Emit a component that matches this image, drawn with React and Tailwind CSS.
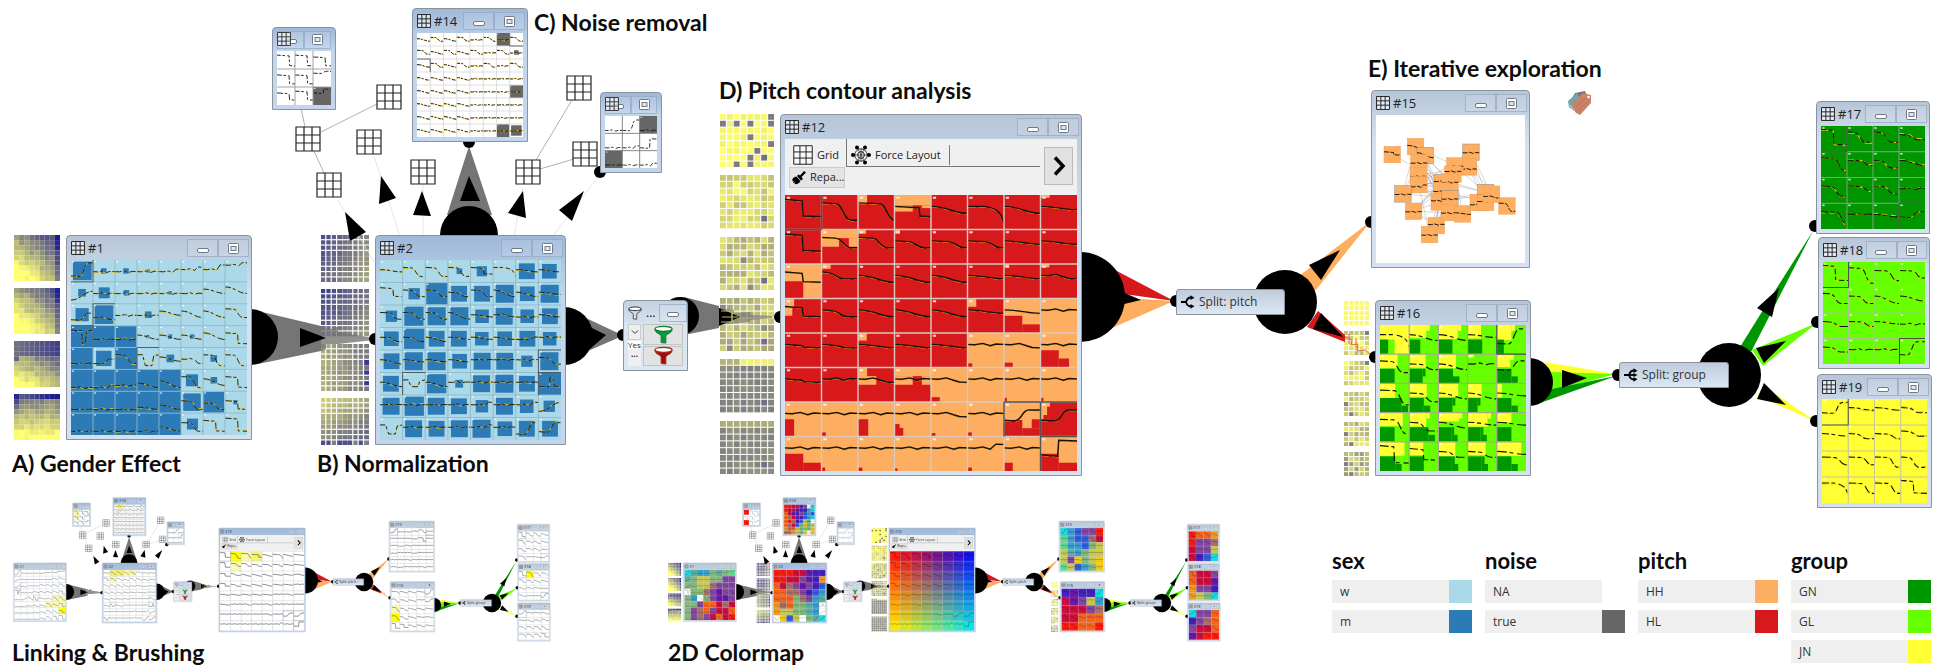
import React from "react";

/* ---------- helpers ---------- */

const rnd = (a, b, s) => {
  const v = Math.sin(a * 127.1 + b * 311.7 + s * 74.7) * 43758.5453;
  return v - Math.floor(v);
};

const mix = (p, q, t) => p.map((v, i) => Math.round(v + (q[i] - v) * t));
const rgb = (c) => `rgb(${c[0]},${c[1]},${c[2]})`;
const YEL = [255, 255, 112];
const GRY = [128, 128, 128];
const NAV = [28, 28, 144];
const quality = (t) => {
  const k = Math.max(-1, Math.min(1, t));
  return rgb(k >= 0 ? mix(GRY, YEL, k) : mix(GRY, NAV, -k));
};

const rainbow = (u, v) =>
  rgb(mix(mix([255, 30, 14], [22, 20, 240], u), mix([255, 228, 0], [16, 228, 228], u), v));

const PALETTE = {
  r: "#fb1d10", m: "#cc1040", o: "#f4641c", a: "#f09a1e", y: "#f6c90e", k: "#c8c850",
  g: "#84b878", l: "#60d890", t: "#58b0a0", c: "#18dce0", s: "#3a9fce", b: "#3460dc",
  i: "#4820c0", p: "#6c18a8", v: "#8448a0", u: "#a87068", w: "#ffffff",
};

const GREEN = "#009600";
const LIME = "#66ff00";
const YELLOW = "#ffff33";
const RED = "#d7191c";
const ORANGE = "#fdae61";
const SKY = "#abd9e9";
const BLUE = "#2c7bb6";
const DARK = "#666666";

/* Contour codes: start tenth, end tenth, shape, optional position tenth. */
const contour = (code) => {
  const a = +code[0] * 10 + 3;
  const b = +code[1] * 10 + 3;
  const k = code[2] || "l";
  const p = (+code[3] || 6) * 10;
  if (k === "s") return `M0 ${a}L${p - 22} ${a + 2}C${p} ${a + 3} ${p - 2} ${b - 2} ${p + 20} ${b}L100 ${b}`;
  if (k === "d") return `M0 ${a}L${p - 3} ${a + 4}L${p} ${b - 2}L100 ${b}`;
  if (k === "e") return `M0 ${a}L45 ${a}C75 ${a + 4} 92 ${a + 12} 100 ${b}`;
  if (k === "f") return `M0 ${a}L20 ${a + 1}L42 ${a - 3}L62 ${a + 4}L78 ${b - 1}L100 ${b}`;
  if (k === "n") return `M0 ${b}L48 ${b}L52 ${a}L64 ${a}L72 ${b}L100 ${b}`;
  if (k === "q") return `M0 ${a}L25 ${a}L38 ${b}L68 ${b}L76 ${a + 5}L100 ${a}`;
  return `M0 ${a}C45 ${a} 60 ${b} 100 ${b}`;
};

const rows = (s) => s.trim().split("\n").map((r) => r.trim().split(/\s+/));

/* ---------- data ---------- */

const C1 = rows(`
  71s 55f 55f 55f 54f 43f 42f 21f
  84l 55f 55f 55f 55f 55f 35l 25l
  74s 67f 55f 55f 35l 36l 36l 26s
  82n 66f 66f 46l 46l 46l 36l 38d
  77f 75s 37s 38q 46l 57f 38s 38s
  88f 87f 77f 68l 58l 38s 47l 38d
  88f 88f 88f 78l 68l 48s 58s 48d
  88f 88f 88f 88f 68l 48s 38d 28d`);
const F1 = rows(`
  .85 .25 .25 .15 0 0 0 0
  .35 .5 .25 .08 .15 0 0 0
  .6 .85 .08 .3 0 0 0 0
  1 1 .95 .15 .2 .2 0 0
  1 .7 1 0 .35 0 .3 0
  1 1 1 1 1 .55 .3 0
  1 1 1 1 1 .8 .95 .2
  1 1 1 1 1 .5 0 0`);
const C2 = rows(`
  45l 37s 37s 37s 36d 37e 45l 45l
  26d 36s 36s 46s 36s 36l 46l 45l
  36s 36s 36s 36l 45l 45f 55f 45l
  46s 46s 46l 45l 45l 45l 54f 44f
  46l 45l 45l 45l 44f 44f 44f 36s
  46l 36q 46l 44f 44f 44f 44f 26n
  44f 44f 44f 44f 43f 44f 43f 73l
  37q 44f 44f 44f 43f 44f 72s 62s`);
const F2 = rows(`
  0 0 0 .25 .45 0 .7 .65
  0 .5 .95 .7 .7 .8 .65 .8
  .5 .85 .8 .8 .6 .75 .6 .7
  .65 .9 .7 .7 .6 .65 .7 .6
  .7 .8 .8 .65 .75 .75 .5 .8
  .7 0 .85 .35 .75 .8 .7 1
  .75 .85 .75 .7 .55 .75 .6 .5
  0 .75 .7 .75 .8 .65 .7 .7`);
const C12 = rows(`
  16d5 27s6 27s8 36d7 35l 38e 35l 34l
  16d5 25s6 25s6 35s6 35s7 35s7 34l 34l
  25d5 24s4 35l 35l 35l 34l 34l 34f
  25d5 35s5 35l 35l 35l 34l 34l 33f
  34d5 34s5 34l 34l 34l 33f 34f 33f
  34d5 33f 34f 33f 34f 33f 33f 33f
  33f 33f 33f 33f 34f 33f 52s5 52s6
  33f 33f 33f 33f 33f 32f 33f 51d5`);
const R = RED;
const O = ORANGE;
const P12 = {
  "0,2": [R, [0, 0, 25, 25]], "0,3": [R, [0, 0, 100, 30], [0, 30, 50, 18], [75, 30, 25, 8]],
  "0,7": [R, [0, 0, 25, 8]], "1,1": [R, [0, 0, 100, 25], [0, 25, 48, 25], [75, 25, 25, 25]],
  "1,2": [R, [0, 0, 22, 12]], "1,3": [R, [0, 0, 15, 12]],
  "2,0": [O, [0, 50, 50, 50]], "2,1": [R, [0, 0, 25, 14]], "2,6": [R, [0, 0, 14, 10]], "2,7": [R, [0, 0, 24, 10]],
  "3,0": [R, [0, 0, 25, 25], [0, 25, 20, 25]], "3,5": [R, [0, 0, 24, 24]],
  "3,6": [O, [0, 50, 50, 50], [50, 75, 50, 25]], "3,7": [O], "4,2": [R, [0, 0, 24, 22]],
  "4,5": [O, [0, 88, 13, 12]], "4,6": [O, [0, 86, 24, 14]], "4,7": [O, [0, 50, 50, 50], [50, 74, 28, 26]],
  "5,2": [R, [0, 0, 25, 50], [25, 25, 25, 25]], "5,3": [R, [0, 0, 100, 25], [0, 25, 50, 25], [75, 25, 25, 25]],
  "5,4": [O, [0, 86, 24, 14]], "5,5": [O], "5,6": [O, [0, 88, 8, 12]], "5,7": [O, [0, 88, 8, 12]],
  "6,0": [O, [0, 50, 25, 50]], "6,1": [O, [0, 88, 12, 12]], "6,2": [O, [0, 50, 28, 50]], "6,3": [O, [0, 64, 14, 36], [0, 75, 24, 25]],
  "6,4": [O, [0, 90, 12, 10]], "6,5": [O, [0, 88, 12, 12]], "6,6": [O, [0, 52, 50, 48], [50, 76, 50, 24], [76, 50, 24, 26]],
  "6,7": [R],
  "7,0": [O, [0, 50, 50, 50], [50, 76, 50, 24]], "7,1": [O, [0, 90, 10, 10]], "7,2": [O, [0, 90, 12, 10]], "7,3": [O, [0, 92, 8, 8]],
  "7,4": [O], "7,5": [O, [0, 90, 12, 10]], "7,6": [O, [0, 76, 24, 24]], "7,7": [O, [0, 50, 50, 50], [50, 76, 50, 24]],
};
const C16 = rows(`
  37e 35l 35l 34l 61s6
  26s6 35s6 35l 33f 52s6
  27s7 36s6 35l 35l 34l
  27s7 36s5 35l 34l 34l
  17d5 26d5 35s5 35s6 34l`);
const P16 = [
  [[100, 50, 28], [58, 44, 38], [66, 48, 48], [46, 46, 50], [50, 52, 24]],
  [[60, 48, 50], [56, 46, 46], [60, 48, 50], [22, 12, 0], [46, 44, 50]],
  [[52, 50, 74], [60, 46, 50], [68, 46, 48], [48, 48, 34], [18, 48, 50]],
  [[78, 46, 50], [58, 48, 66], [70, 30, 44], [68, 48, 44], [50, 34, 50]],
  [[84, 48, 52], [48, 46, 50], [58, 50, 46], [62, 46, 48], [84, 48, 50]],
];
const C17 = rows(`
  17d5 26s5 26s5 35s5
  27s7 35s7 36s5 35l
  37s6 35s7 36s6 44f
  38s8 44f 45l 53s6`);
const C18 = rows(`
  17d5 28s7 37s7 36s7
  26s5 36s6 36l 35l
  35s5 35s7 34l 44f
  35s5 44f 44f 61s5`);
const C19 = rows(`
  51s6 34l 34l 35s5
  34l 35s5 35s7 24s5
  25s7 25s7 26s7 26s5
  27e 26s7 26s7 16d5`);
const C14 = Array.from({ length: 8 }, (_, r) =>
  Array.from({ length: 8 }, (_, c) => (r < 3 && (c + r) % 2 ? "36s" : c < 4 ? "46l" : "55f")));
const CL = rows(`
  28d7 28d7 38d7
  38d7 38d7 21s
  37d7 27d7 31d`);
const CR = rows(`
  88f 82s 88f
  88f 87f 83d
  88f 88f 87f`);
const C15 = rows(`
  61s 55f 55f 44f 26s
  44f 44f 44f 54f 38d
  44f 55f 45f 44f 44f
  55f 44f 44f 54f 44f
  44f 44f 45f 44f 44f
  44f 54f 44f 44f 45f`);

const map = (s) => rows(s.replace(/(\S)/g, "$1 "));
const M1 = map(`ctssgtgl
tgkkggvv
ggkkuvvv
wgguvpvv
gswgvppv
ggvoomum
gvuovmmo
gvuvmomr`);
const M2 = map(`rrrmmpii
rrmmvpia
omuvpvib
oouuvibs
oooguvst
auoggtsw
akkggtsw
wybkwgtc`);
const M14 = map(`rrmmpvwc
rmmpiisc
ompivbsb
oumpibsc
oruibktw
oumbgkgk
auokglgy
uoakgywy`);
const M15 = map(`csbvvr
lsbbum
lssbgk
ktsgkk
kvygky
lkbsgy
`);
const M16 = map(`ipiic
mpvks
mmmvu
mmooo
rroor`);
const M17 = map(`rooa
rvvu
mvvk
mibc`);
const M18 = map(`ommv
ommp
avvi
akgc`);
const M19 = map(`cvvo
ivuo
vmmo
pmrr`);

/* ---------- cell grids ---------- */

function CellGrid({ id, codes, mode, base, map: colours, bright = {}, lines = "#ffffff", sw = 4, marks = [], yellow = true }) {
  const n = codes.length;
  const m = codes[0].length;
  const thumb = mode !== "full";
  const solid = id === 12;
  const cells = [];
  for (let r = 0; r < n; r++) {
    for (let c = 0; c < m; c++) {
      let fill = "#ffffff";
      if (mode === "map") {
        fill = colours ? PALETTE[(colours[r] || [])[c]] || "#ffffff" : rainbow(c / (m - 1), r / (n - 1));
      }
      const d = contour(codes[r][c]);
      cells.push(
        <g key={r + "-" + c} transform={`translate(${c * 100} ${r * 100})`}>
          {mode === "full" ? base(r, c) : <rect width="100" height="100" fill={fill} />}
          {mode === "brush" && bright[r + "," + c] && <rect width="100" height="100" fill={bright[r + "," + c]} />}
          {!thumb && yellow && !solid && (
            <path d={d} transform={`translate(0 ${Math.round(rnd(r, c, 9) * 8) - 4})`} fill="none" stroke="#f5c211" strokeWidth={sw} strokeDasharray={`${16 + Math.round(rnd(r, c, 2) * 14)} 16`} />
          )}
          {!thumb && solid && (
            <path d={d} transform="translate(0 2)" fill="none" stroke="#e89a10" strokeWidth={sw - 1} strokeDasharray="22 9" />
          )}
          <path
            d={d}
            fill="none"
            stroke={mode === "map" ? "#00000066" : mode === "brush" ? "#555" : "#151208"}
            strokeWidth={thumb ? sw * 1.6 : sw}
            strokeDasharray={solid || thumb ? undefined : `${20 + Math.round(rnd(r, c, 6) * 16)} 9 14 13`}
          />
          {!thumb && <rect x="5" y="5" width="9" height="6" fill="#ffffff" opacity="0.8" />}
        </g>
      );
    }
  }
  const grid = [];
  for (let c = 1; c < m; c++) grid.push(<path key={"v" + c} d={`M${c * 100} 0V${n * 100}`} />);
  for (let r = 1; r < n; r++) grid.push(<path key={"h" + r} d={`M0 ${r * 100}H${m * 100}`} />);
  return (
    <svg className="block h-full w-full" viewBox={`0 0 ${m * 100} ${n * 100}`} preserveAspectRatio="none" aria-hidden="true">
      {cells}
      <g stroke={thumb ? "#c8ccd0" : lines} strokeWidth={sw} fill="none" opacity={mode === "map" ? 0.4 : 1}>{grid}</g>
      <g stroke="#33383c" strokeWidth={sw} fill="none" opacity={thumb ? 0.45 : 0.8}>
        {marks.map(([r, c], i) => (
          <path key={i} d={`M${c * 100 + (c ? 0 : 100)} ${r * 100}v100M${c * 100} ${r * 100 + (r ? 0 : 100)}h100`} />
        ))}
      </g>
    </svg>
  );
}

const sized = (F) => (r, c) => {
  const f = +F[r][c] * 100;
  const j = f > 98 ? 0 : Math.round((rnd(r, c, 7) - 0.5) * 8);
  return (
    <>
      <rect width="100" height="100" fill={SKY} />
      {f > 0 && <rect x={50 - f / 2 + j / 2} y={50 - f / 2} width={f} height={f} fill={BLUE} />}
    </>
  );
};
const plain = (fill) => () => <rect width="100" height="100" fill={fill} />;
const patched = (r, c) => {
  const p = P12[r + "," + c] || [R];
  const other = p[0] === R ? O : R;
  return (
    <>
      <rect width="100" height="100" fill={p[0]} />
      {p.slice(1).map(([x, y, w, h], i) => (
        <rect key={i} x={x} y={y} width={w} height={h} fill={other} />
      ))}
      {r === 6 && c === 7 && <path d="M0 0H26V14H18V38H8V50H0Z" fill={O} />}
    </>
  );
};
const grouped = (r, c) => {
  const [y, h, g] = P16[r][c];
  return (
    <>
      <rect width="100" height="100" fill={LIME} />
      <rect width={y} height={h} fill={YELLOW} />
      {r === 0 && c === 0 && <rect x="50" y="45" width="50" height="55" fill={YELLOW} />}
      <rect y="50" width={g} height="50" fill={GREEN} />
      {g > 40 && rnd(r, c, 3) > 0.45 && <rect x={g} y="76" width="22" height="24" fill={GREEN} />}
      {g > 0 && g < 50 && r > 0 && <rect x={g} y="50" width="10" height="26" fill={GREEN} />}
      {y < 80 && y > 30 && rnd(r, c, 5) > 0.4 && <rect x={y} y="0" width="12" height="20" fill={YELLOW} />}
    </>
  );
};
const noisy = (r, c) => {
  const dark = { "0,6": 100, "4,7": 100, "7,6": 100, "7,7": 80, "1,7": 35 }[r + "," + c] || 0;
  return (
    <>
      <rect width="100" height="100" fill="#fff" />
      <rect x={50 - dark / 2} y={50 - dark / 2} width={dark} height={dark} fill={DARK} />
    </>
  );
};
const single = (keys) => (r, c) => <rect width="100" height="100" fill={keys.includes(r + "," + c) ? DARK : "#fff"} />;

/* ---------- quality strips ---------- */

const WEAVE_X = [2.2, 2.2, 2.2, 0.5, 0.4, 2.2, 2.2, 2.4, 1];
const WEAVE_Y = [2.2, 2.2, 2.2, 0.5, 0.5, 2.2, 2.2, 2.2, 1];

function Strip({ kind, index, n, gap }) {
  const out = [];
  for (let r = 0; r < n; r++) {
    for (let c = 0; c < n; c++) {
      const k = rnd(r, c, index + 11);
      let t = 0;
      if (kind === "a") {
        const slope = [0.1, 0.12, 0.25, 0.4][index];
        t = (r / (n - 1)) * (0.9 + slope) - (c / (n - 1)) * (0.95 - slope) + (index === 1 ? 0.08 : 0) + (k - 0.5) * 0.25;
        if (index < 2) t += 0.25 - (c === n - 1 ? 0.4 : 0);
        if (index === 3) t = r === 0 ? -0.3 - (c / n) * 0.9 : (r / (n - 1)) * 1.15 - 0.1 + (k - 0.5) * 0.25;
        if (index > 1 && c === 0 && r < 4) t = index === 2 ? -0.7 + r * 0.15 : -0.9 + r * 0.35;
        if (index === 2 && r < 3) t = -0.15 - c * 0.06;
      } else if (kind === "b") {
        t = [-0.5 + c * 0.07 + r * 0.03, -0.6 + c * 0.06 + r * 0.04, 0.35 - c * 0.05, 0.65 - r * 0.08 - c * 0.04][index] + (k - 0.5) * 0.12;
        if (index === 2 && c === n - 1 && k > 0.5) t = -0.7;
        if (index === 3 && r === n - 1) t = k > 0.5 ? -0.5 : 0;
      } else if (kind === "d") {
        t = [0.95, 0.72, 0.6, 0.5, 0.05, 0.08][index] + (k - 0.5) * [0.15, 0.45, 0.5, 0.5, 0.12, 0.16][index];
        if (index === 0 && k > 0.87) t = -0.05;
        if ((index === 2 || index === 3) && k > 0.9) t = 0.1;
        if (index === 4 && r === 0) t = k > 0.4 ? 0.9 : 0.4;
        if (index === 5 && r === 0) t = 0.35;
        if (r === 6 && c === 6) t = -0.15;
      } else {
        t = [0.95, 0.7, 0.75, 0.65, 0.6, 0.45][index] + (k - 0.5) * (index ? 0.5 : 0);
        if (index > 0 && index < 3 && r === 0 && c === n - 1) t = 0;
        if (index > 2 && ((r === 2 && c === 0) || (r === n - 1 && c === 1))) t = 0;
      }
      const gx = kind === "b" ? WEAVE_X[c] : gap;
      const gy = kind === "b" ? WEAVE_Y[r] : gap;
      out.push(<rect key={r + "-" + c} x={c * 10} y={r * 10} width={10 - gx} height={10 - gy} fill={quality(t)} />);
    }
  }
  return (
    <svg className="block w-full min-h-0 flex-1" viewBox={`0 0 ${n * 10 - gap} ${n * 10 - gap}`} preserveAspectRatio="none" aria-hidden="true">
      {out}
    </svg>
  );
}

function Strips({ kind, count, n, gap, className }) {
  return (
    <div className={"absolute flex flex-col " + className}>
      {Array.from({ length: count }, (_, i) => (
        <Strip key={i} kind={kind} index={i} n={n} gap={gap} />
      ))}
    </div>
  );
}

/* ---------- icons ---------- */

function GridIcon({ className = "size-3.5", w = 1 }) {
  return (
    <svg className={"shrink-0 " + className} viewBox="0 0 26 26" fill="#fff" fillOpacity="0.6" stroke="#222" strokeWidth={w} aria-hidden="true">
      <path d="M1 1H25V25H1ZM9 1V25M17 1V25M1 9H25M1 17H25" />
    </svg>
  );
}

function ForceIcon() {
  const dots = [[2, 10], [18, 10], [6, 2.4], [14, 2.4], [6, 17.6], [14, 17.6]];
  return (
    <svg className="size-5 shrink-0" viewBox="0 0 20 20" aria-hidden="true">
      <path d="M6 2.400L14 17.600M14 2.400L6 17.600M2 10H18M10 4V16" stroke="#333" strokeWidth="0.700" />
      <circle cx="10" cy="10" r="6.200" fill="none" stroke="#222" strokeWidth="0.900" />
      <circle cx="10" cy="10" r="3.400" fill="none" stroke="#222" strokeWidth="1" />
      {dots.map(([x, y]) => (
        <circle key={x + "-" + y} cx={x} cy={y} r="2" fill="#000" />
      ))}
    </svg>
  );
}

function BrushIcon() {
  return (
    <svg className="size-3.5 shrink-0" viewBox="0 0 14 14" aria-hidden="true">
      <path d="M12 0L14 1.5L9.5 6L11 8L9 9.5L5 5L6.5 3.5L8 4.5Z" />
      <path d="M4.5 5.5L8.5 10C7 13 4 13.5 2.5 13L3 11.5L1.2 12L1.5 10L0 9.5C0.5 7 2 6 4.5 5.5Z" />
    </svg>
  );
}

function Funnel({ fill, stroke, className }) {
  return (
    <svg className={"shrink-0 " + className} viewBox="0 0 20 20" aria-hidden="true">
      <path d="M1 4.5C1 9 7.500 9 7.500 12V18.500L12.500 19V12C12.500 9 19 9 19 4.500Z" fill={fill} stroke={stroke} strokeWidth="1" />
      <ellipse cx="10" cy="4" rx="9" ry="2.600" fill="#fff" stroke={stroke} strokeWidth="1.300" />
    </svg>
  );
}

function SplitIcon({ three }) {
  return (
    <svg className="size-3.5 shrink-0" viewBox="0 0 14 14" fill="none" stroke="#000" strokeWidth="1.800" aria-hidden="true">
      <path d="M0 7H5C6 3.500 8 2.500 10 2.500M5 7C6 10.500 8 11.500 10 11.500" />
      {three && <path d="M5 7H11" />}
      <path d="M9.500 0.300L13.500 2.700L9.500 5ZM9.500 9L13.500 11.300L9.500 13.700Z" fill="#000" stroke="none" />
      {three && <path d="M9.500 5L13.500 7L9.500 9Z" fill="#000" stroke="none" />}
    </svg>
  );
}

function MinButton() {
  return (
    <button type="button" aria-label="Minimize" className="flex h-[18px] min-w-0 flex-1 items-center justify-center border border-[#93a5bb]/70 bg-white/10">
      <span className="mt-1 h-[5px] w-3 rounded-xs border border-[#6f7884] bg-white" />
    </button>
  );
}

function MaxButton() {
  return (
    <button type="button" aria-label="Maximize" className="flex h-[18px] min-w-0 flex-1 items-center justify-center border border-[#93a5bb]/70 bg-white/10">
      <svg className="size-[11px]" viewBox="0 0 11 11" aria-hidden="true">
        <rect x="0.500" y="0.500" width="10" height="10" rx="1" fill="#fff" stroke="#6f7884" />
        <rect x="3" y="3.500" width="5" height="4" fill="#dce6f2" stroke="#6f7884" />
      </svg>
    </button>
  );
}

/* ---------- windows ---------- */

function Win({ title, active, compact, className, children }) {
  return (
    <section
      className={
        "absolute flex flex-col rounded-t-[4px] border border-[#8b949e] px-1 pb-1 " +
        (active ? "bg-linear-to-b from-[#9fb9d9] to-[#c3d6ee] to-30% " : "bg-linear-to-b from-[#b6c6d8] to-[#d5e1f0] to-30% ") +
        className
      }
    >
      {compact ? (
        <header className="relative flex h-[23px] shrink-0 items-center">
          <GridIcon className="absolute left-0 top-1 size-3.5" w={1.6} />
          <MinButton />
          <MaxButton />
        </header>
      ) : (
        <header className="flex h-6 shrink-0 items-center gap-[3px]">
          <GridIcon w={1.8} />
          <h3 className="flex-1 text-[13px] leading-5 text-[#222]">{title}</h3>
          <div className="-mr-0.5 flex w-[62px]">
            <MinButton />
            <MaxButton />
          </div>
        </header>
      )}
      <div className="flex min-h-0 flex-1 flex-col">{children}</div>
    </section>
  );
}

function SplitNode({ label, three, className }) {
  return (
    <div className={"absolute flex items-center gap-1 rounded-t-[3px] border border-[#8b949e] bg-linear-to-b from-[#bfccdb] to-[#dce7f4] px-1 text-[12px] text-[#333] " + className}>
      <SplitIcon three={three} />
      <span className="whitespace-nowrap">{label}</span>
    </div>
  );
}

function FilterNode() {
  return (
    <section className="absolute left-[623px] top-[300px] flex h-[71px] w-[65px] flex-col rounded-t-[4px] border border-[#8b949e] bg-linear-to-b from-[#c3d1e2] to-[#dbe6f3] to-40% px-1">
      <header className="flex h-[23px] shrink-0 items-center gap-1 text-[12px]">
        <Funnel fill="none" stroke="#222" className="size-3.5" />
        <span className="flex-1">...</span>
        <div className="-mr-1 flex w-[30px]">
          <MinButton />
        </div>
      </header>
      <div className="flex min-h-0 flex-1 gap-0.5 pb-1">
        <div className="flex w-[13px] flex-col items-center justify-between bg-[#efefef] text-[8px] leading-2 text-[#222]">
          <button type="button" aria-label="Show list" className="flex h-4 w-full items-center justify-center border border-[#ccc]">
            <svg className="size-2" viewBox="0 0 8 8" fill="none" stroke="#333" aria-hidden="true"><path d="M1 2.500L4 5.500L7 2.500" /></svg>
          </button>
          <span className="w-full bg-white">Yes</span>
          <span className="pb-2 font-bold">...</span>
        </div>
        <div className="flex flex-1 flex-col gap-px">
          <button type="button" aria-label="Keep" className="flex min-h-0 flex-1 items-center justify-center border border-[#c4c4c4] bg-[#e2e2e2]">
            <Funnel fill="#0c9a3c" stroke="#0c7c30" className="size-[19px]" />
          </button>
          <button type="button" aria-label="Remove" className="flex min-h-0 flex-1 items-center justify-center border border-[#c4c4c4] bg-[#e2e2e2]">
            <Funnel fill="#a00c0c" stroke="#a03020" className="size-[19px]" />
          </button>
        </div>
      </div>
    </section>
  );
}

const FORCE = [
  [162, 286, "35d"], [232, 262, "46l"], [261, 289, "36l"], [242, 310, "55f"], [240, 350, "55f"], [242, 376, "65f"],
  [194, 404, "55f"], [226, 456, "55f"], [294, 499, "44f"], [274, 526, "55f"], [398, 279, "55f"], [391, 323, "66f"],
  [350, 320, "55f"], [344, 345, "33f"], [312, 370, "44f"], [335, 368, "55f"], [310, 395, "55f"], [303, 428, "44f"],
  [335, 418, "55f"], [333, 460, "55f"], [373, 464, "45l"], [420, 430, "66f"], [442, 400, "66f"], [442, 430, "44f"],
  [460, 405, "67f"], [506, 440, "38s"],
];

function ForceChart() {
  const at = (i) => [(FORCE[i][0] - 138) / 3 + 8, (FORCE[i][1] - 192) / 3 + 8];
  const links = [];
  for (let i = 0; i < FORCE.length; i++)
    for (let j = i + 1; j < FORCE.length; j++)
      if (rnd(i, j, 4) > 0.62) {
        const [x1, y1] = at(i);
        const [x2, y2] = at(j);
        if (Math.hypot(x1 - x2, y1 - y2) < 62) links.push([x1, y1, x2, y2]);
      }
  return (
    <svg className="block h-full w-full bg-white" viewBox="0 0 149 148" preserveAspectRatio="none" aria-hidden="true">
      <g stroke="#999" strokeWidth="0.400">
        {links.map((l, i) => (
          <line key={i} x1={l[0]} y1={l[1]} x2={l[2]} y2={l[3]} />
        ))}
      </g>
      {FORCE.map(([x, y, code], i) => (
        <g key={i} transform={`translate(${(x - 138) / 3} ${(y - 192) / 3}) scale(0.165)`}>
          <rect width="100" height="100" fill={ORANGE} stroke={i % 4 === 2 ? "#888" : "#f0a050"} strokeWidth="3" />
          <path d={contour(code)} fill="none" stroke="#1c1508" strokeWidth="6" strokeDasharray="30 8" />
        </g>
      ))}
    </svg>
  );
}

function Toolbar() {
  return (
    <div className="flex h-14 shrink-0 items-start bg-[#f0f0f0] pl-1 pr-1 text-[11px] text-[#222]">
      <div className="flex flex-1 flex-col">
        <div className="flex h-7">
          <button type="button" className="flex w-[58px] items-center gap-1 border-r border-[#777] pl-1 pt-1">
            <GridIcon className="size-5" w={1.3} />
            Grid
          </button>
          <button type="button" className="mr-1 flex flex-1 items-center gap-1 border-b border-[#777] pl-1 pt-1">
            <ForceIcon />
            <span className="whitespace-nowrap border-r border-[#777] pr-2 leading-5">Force Layout</span>
          </button>
        </div>
        <button type="button" className="flex h-[21px] w-14 items-center gap-1 border border-[#ccc] bg-[#e4e4e4] pl-0.5">
          <BrushIcon />
          Repa...
        </button>
      </div>
      <button type="button" aria-label="Next" className="mt-2 flex h-[38px] w-[29px] items-center justify-center border border-[#bbb] bg-[#e1e1e1]">
        <svg className="size-5" viewBox="0 0 20 20" fill="none" stroke="#000" strokeWidth="3.500" aria-hidden="true">
          <path d="M6 1.500L14 10L6 18.500" />
        </svg>
      </button>
    </div>
  );
}

/* ---------- connectors ---------- */

function Ports() {
  const ports = [
    [375, 339], [469, 142], [623, 335], [780, 317], [1176, 301], [1371, 222], [1375, 357], [1618, 375], [1815, 226], [1817, 322], [1816, 421], [600, 172],
  ];
  const hubs = [[250, 337, 28], [469, 235, 29], [564, 336, 29], [680, 316, 19], [1080, 297, 45], [1285, 302, 32], [1529, 382, 24], [1729, 375, 32]];
  return (
    <svg className="absolute left-0 top-0 h-[520px] w-[1949px]" viewBox="0 0 1949 520" aria-hidden="true">
      <g fill="#757575">
        <path d="M258 311L321 326V351L258 364Z" />
        <path d="M321 326H326V329H332V327H338V332L374 338V340L338 344H326V349L321 351Z" opacity="0.8" />
        <path d="M447 215L469 146L492 215Z" />
        <path d="M588 319L620 334V337L588 351Z" />
        <path d="M684 297L719 306V328L684 335Z" />
        <path d="M719 308L734 310V313L750 312V315L772 316V318L750 320V322L719 325Z" opacity="0.65" />
      </g>
      <path d="M1115 270L1174 301L1124 294Z" fill={RED} />
      <path d="M1112 328L1174 301L1124 298Z" fill={ORANGE} />
      <path d="M1299 276L1316 290L1371 221Z" fill={ORANGE} />
      <path d="M1318 311L1307 327L1345 342V335Z" fill={RED} />
      <path d="M1345 337L1352 340L1351 345L1358 344L1357 351L1365 350L1374 357M1349 334V344M1356 338V347" fill="none" stroke="#e06a3a" strokeWidth="1" />
      <path d="M1545 362L1616 374L1550 374Z" fill={YELLOW} />
      <path d="M1552 372L1616 374L1548 392Z" fill={LIME} />
      <path d="M1552 389L1616 376L1540 403Z" fill={GREEN} />
      <path d="M1740 347L1751 352L1813 231L1778 286Z" fill={GREEN} />
      <path d="M1752 350L1763 366L1817 323Z" fill={LIME} />
      <path d="M1757 396L1764 386L1817 422Z" fill={YELLOW} />
      <g stroke="#9a9a9a" strokeWidth="0.800">
        <path d="M301 108L305 127M321 132L377 104M314 151L324 173M572 100L536 160M540 169L574 159" />
      </g>
      <g stroke="#dedede" strokeWidth="0.800">
        <path d="M338 200L374 262M374 156L400 236M423 185V236M523 188L514 236M600 174L553 236" />
      </g>
      <g fill="#000">
        {hubs.map(([x, y, r]) => (
          <circle key={x} cx={x} cy={y} r={r} />
        ))}
        {ports.map(([x, y]) => (
          <circle key={x + "-" + y} cx={x} cy={y} r="6" />
        ))}
        <path d="M300 328V347L326 338ZM469 176L460 201H480ZM590 327V349L606 335ZM719 308V326L740 317Z" fillOpacity="1" />
        <path d="M1120 291V305L1141 300ZM1309 265L1321 280L1340 250ZM1321 313L1313 329L1343 337ZM1562 370V388L1587 378Z" />
        <path d="M1779 288L1757 308L1772 317ZM1786 341L1756 348L1764 363ZM1786 405L1764 383L1757 399Z" />
        <path d="M345 212L366 232L350 241ZM381 176L396 198L379 204ZM422 191L413 215L431 216ZM523 191L508 213L526 218ZM584 191L559 210L572 221Z" />
      </g>
      <path d="M721 311H732V322H721M732 313V321M722 317H738" stroke="#b8b860" strokeWidth="1" fill="none" />
    </svg>
  );
}

function TagIcon() {
  return (
    <svg className="absolute left-[1567px] top-[90px] size-[26px]" viewBox="0 0 26 26" aria-hidden="true">
      <path d="M8 3L18 1L20 6L10 18L3 12Z" fill="#7d6f7c" />
      <path d="M1 11L10 3L17 16L10 23L2 17Z" fill="#6fa7b0" />
      <path d="M3 15L9 22" stroke="#c7dde0" strokeWidth="1" />
      <path d="M4 14L16 3L24 5V13L13 25L9 23Z" fill="#c98268" />
      <path d="M9 17L18 8M12 20L20 12" stroke="#b56f58" strokeWidth="0.800" />
      <circle cx="21.500" cy="7" r="1.300" fill="#fff" />
    </svg>
  );
}

/* ---------- the diagram ---------- */

const LOOSE = [
  "left-[376px] top-[84px]", "left-[295px] top-[126px]", "left-[356px] top-[129px]", "left-[316px] top-[172px]",
  "left-[410px] top-[159px]", "left-[515px] top-[159px]", "left-[572px] top-[141px]", "left-[566px] top-[75px]",
];
const HI = "#ffff00";
const LO = "#fbfab0";

function Diagram({ mode }) {
  const full = mode === "full";
  return (
    <div className="absolute left-0 top-0 h-[520px] w-[1949px]">
      {mode !== "brush" && (
        <>
          <Strips kind="a" count={4} n={9} gap={0} className="left-[14px] top-[235px] h-[205px] w-[46px] gap-[7px]" />
          <Strips kind="b" count={4} n={9} gap={1} className="left-[321px] top-[235px] h-[210px] w-12 gap-[7px]" />
          <Strips kind="d" count={6} n={8} gap={1.5} className="left-[720px] top-[114px] h-[360px] w-[54px] gap-2" />
          <Strips kind="e" count={6} n={5} gap={2} className="left-[1344px] top-[301px] h-[175px] w-[25px] gap-1.5" />
        </>
      )}
      <Ports />
      {LOOSE.map((p) => (
        <div key={p} className={"absolute " + p}>
          <GridIcon className="block size-[26px]" w={1.2} />
        </div>
      ))}

      <Win title="#1" className="left-[66px] top-[235px] h-[205px] w-[186px]">
        <CellGrid mode={mode} codes={C1} base={sized(F1)} map={M1} lines="#8fb9c8" bright={{ "4,6": LO, "4,7": LO, "5,5": LO, "5,6": LO, "5,7": LO, "6,7": HI }} marks={[[0, 0], [3, 0], [2, 1], [4, 3]]} />
      </Win>
      <Win active title="#2" className="left-[375px] top-[235px] h-[210px] w-[191px]">
        <CellGrid mode={mode} codes={C2} base={sized(F2)} map={M2} lines="#8fb9c8" bright={{ "0,1": "#f5f070", "0,2": "#f5f070", "0,3": LO, "0,4": LO, "1,1": LO }} marks={[[5, 7], [5, 1], [4, 7]]} />
      </Win>
      <Win active title="#14" className="left-[412px] top-[8px] h-[134px] w-[116px]">
        <CellGrid mode={mode} codes={C14} base={noisy} map={M14} lines="#dcdcdc" sw={7} bright={{ "0,1": HI, "0,2": LO, "1,1": LO }} marks={[[0, 7], [2, 0]]} />
      </Win>
      <Win active compact className="left-[272px] top-[27px] h-[83px] w-16">
        <CellGrid mode={mode} codes={CL} base={single(["2,2"])} map={map("rww\nwww\nrww")} lines="#999" sw={5} yellow={false} bright={{ "0,0": LO, "1,0": LO }} />
      </Win>
      <Win active compact className="left-[600px] top-[92px] h-[81px] w-[62px]">
        <CellGrid mode={mode} codes={CR} base={single(["0,2", "2,0"])} map={map("www\nwww\nwww")} lines="#777" sw={5} yellow={false} />
      </Win>
      <FilterNode />
      <Win title="#12" active={!full} className="left-[780px] top-[114px] h-[362px] w-[302px]">
        <Toolbar />
        <div className="min-h-0 flex-1">
          <CellGrid id={12} mode={mode} codes={C12} base={patched} lines="#d8c8c0" sw={4} bright={{ "0,1": HI, "0,2": LO, "0,3": "#f8f470", "1,1": LO }} marks={[[6, 6], [6, 7], [7, 7], [0, 0]]} />
        </div>
      </Win>
      <SplitNode label="Split: pitch" className="left-[1176px] top-[289px] h-[26px] w-[109px]" />
      <Win title="#15" className="left-[1371px] top-[90px] h-[178px] w-[159px]">
        {full ? <ForceChart /> : <CellGrid mode={mode} codes={C15.map((r) => [...r, "44f"])} map={M15} sw={5} marks={[[0, 0], [0, 5], [1, 5]]} />}
      </Win>
      <Win title="#16" className="left-[1375px] top-[300px] h-[176px] w-[156px]">
        <CellGrid mode={mode} codes={C16} base={grouped} map={M16} lines="#a8a890" sw={4} yellow={false} bright={{ "2,0": LO, "3,0": HI }} marks={[[0, 4]]} />
      </Win>
      <SplitNode three label="Split: group" className="left-[1619px] top-[362px] h-[26px] w-[110px]" />
      <Win title="#17" className="left-[1816px] top-[101px] h-[133px] w-[114px]">
        <CellGrid mode={mode} codes={C17} base={plain(GREEN)} map={M17} lines="#7f9f7f" marks={[[0, 0], [3, 3]]} />
      </Win>
      <Win title="#18" className="left-[1818px] top-[237px] h-[132px] w-[112px]">
        <CellGrid mode={mode} codes={C18} base={plain(LIME)} map={M18} lines="#a8c890" bright={{ "0,1": HI }} marks={[[0, 0], [3, 3]]} />
      </Win>
      <Win title="#19" className="left-[1817px] top-[374px] h-[134px] w-[115px]">
        <CellGrid mode={mode} codes={C19} base={plain(YELLOW)} map={M19} lines="#c8c890" marks={[[0, 0]]} />
      </Win>
    </div>
  );
}

/* ---------- page ---------- */

const HEAD = "font-['Lato'] text-[23px] leading-7 font-bold text-[#0c0c0c] whitespace-nowrap";

function Thumbnail({ mode, caption, className, captionClass }) {
  return (
    <figure className={"flex shrink-0 flex-col " + className}>
      <div className="relative h-[143px]" aria-hidden="true" inert>
        <div className="absolute left-0 top-0 origin-top-left scale-[0.288]">
          <Diagram mode={mode} />
        </div>
      </div>
      <figcaption className={HEAD + " " + captionClass}>{caption}</figcaption>
    </figure>
  );
}

function LegendGroup({ name, items }) {
  return (
    <section className="flex w-[140px] flex-col gap-[7px]">
      <h2 className="font-['Lato'] text-[22px] leading-6 font-bold text-[#0c0c0c]">{name}</h2>
      {items.map(([label, swatch]) => (
        <div key={label} className="flex h-[23px] text-[12px] leading-[23px] text-[#333]">
          <span className="flex-1 bg-[#efefef] pl-2">{label}</span>
          <span className={"w-[23px] " + swatch} />
        </div>
      ))}
    </section>
  );
}

export default function App() {
  return (
    <main className="min-h-screen overflow-hidden bg-white font-['Open_Sans',sans-serif]">
      <div className="relative h-[495px]">
        <Diagram mode="full" />
        <TagIcon />
        <h2 className={"absolute left-[12px] top-[449px] " + HEAD}>A) Gender Effect</h2>
        <h2 className={"absolute left-[317px] top-[449px] " + HEAD}>B) Normalization</h2>
        <h2 className={"absolute left-[534px] top-[8px] " + HEAD}>C) Noise removal</h2>
        <h2 className={"absolute left-[719px] top-[76px] " + HEAD}>D) Pitch contour analysis</h2>
        <h2 className={"absolute left-[1368px] top-[54px] " + HEAD}>E) Iterative exploration</h2>
      </div>
      <div className="flex items-start">
        <Thumbnail mode="brush" caption="Linking & Brushing" className="-ml-1.5 w-[670px]" captionClass="pl-[18px]" />
        <Thumbnail mode="map" caption="2D Colormap" className="w-[668px]" captionClass="pl-1" />
        <div className="flex gap-[13px] pt-[54px]">
          <LegendGroup name="sex" items={[["w", "bg-[#abd9e9]"], ["m", "bg-[#2c7bb6]"]]} />
          <LegendGroup name="noise" items={[["NA", "bg-white"], ["true", "bg-[#666666]"]]} />
          <LegendGroup name="pitch" items={[["HH", "bg-[#fdae61]"], ["HL", "bg-[#d7191c]"]]} />
          <LegendGroup name="group" items={[["GN", "bg-[#009600]"], ["GL", "bg-[#66ff00]"], ["JN", "bg-[#ffff33]"]]} />
        </div>
      </div>
    </main>
  );
}
